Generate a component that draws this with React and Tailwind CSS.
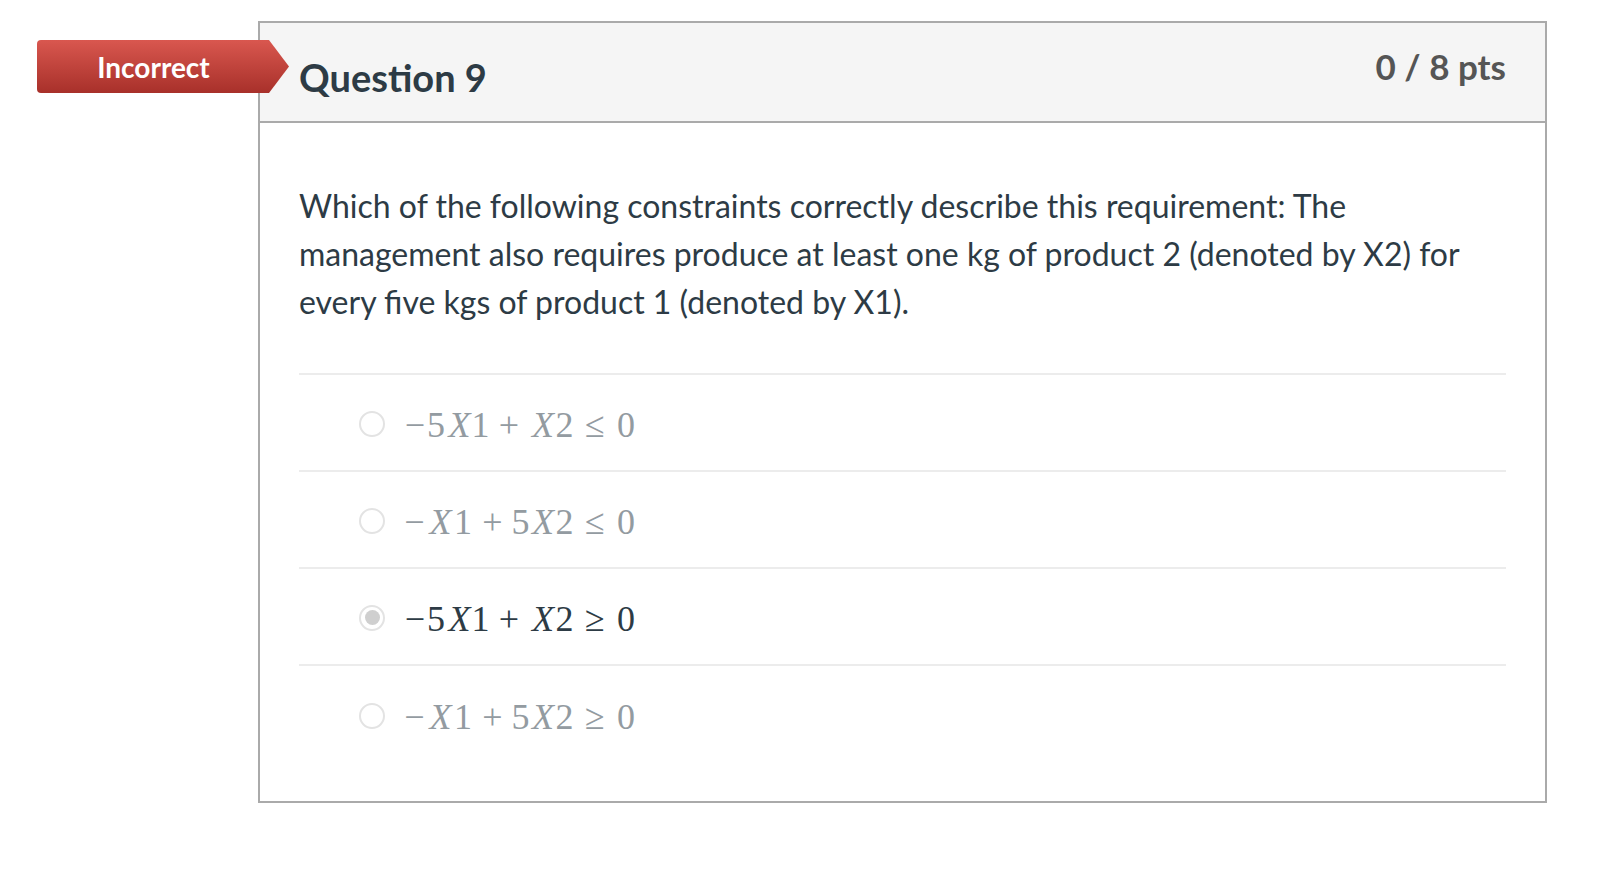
import React from 'react';

// each token: [text, box width, italic]
const answers = [
  {
    id: 'a',
    selected: false,
    tokens: [['−', 22], ['5', 20], ['X', 27, true], ['1', 15], ['+', 42], ['X', 26, true], ['2', 17], ['≤', 44], ['0', 18]],
  },
  {
    id: 'b',
    selected: false,
    tokens: [['−', 21], ['X', 31, true], ['1', 14], ['+', 45], ['5', 11], ['X', 34, true], ['2', 9], ['≤', 52], ['0', 10]],
  },
  {
    id: 'c',
    selected: true,
    tokens: [['−', 22], ['5', 20], ['X', 27, true], ['1', 15], ['+', 42], ['X', 26, true], ['2', 17], ['≥', 44], ['0', 18]],
  },
  {
    id: 'd',
    selected: false,
    tokens: [['−', 21], ['X', 31, true], ['1', 14], ['+', 45], ['5', 11], ['X', 34, true], ['2', 9], ['≥', 52], ['0', 10]],
  },
];

const MathExpr = ({ tokens, selected }) => (
  <span
    className={`mt-[4px] flex h-[40px] items-center text-[36px] leading-none ${selected ? 'text-[#2d3b45]' : 'text-[#939ba1]'}`}
    style={{ fontFamily: '"Liberation Serif", serif' }}
  >
    {tokens.map(([t, w, italic], i) => (
      <span key={i} className="flex justify-center whitespace-nowrap" style={{ width: w }}>
        <span className={italic ? 'italic' : ''}>{t}</span>
      </span>
    ))}
  </span>
);

const Radio = ({ checked }) => (
  <span className="mt-[2px] flex h-[26px] w-[26px] shrink-0 items-center justify-center rounded-full border-2 border-[#e3e3e3] bg-white">
    {checked && <span className="h-[15px] w-[15px] rounded-full bg-[#cfcfcf]" />}
  </span>
);

const App = () => {
  return (
    <div className="h-[870px] w-full bg-white" style={{ fontFamily: 'Lato, "Liberation Sans", sans-serif' }}>
      <div className="pl-[258px] pt-[21px]">
        <div className="relative w-[1289px] border-2 border-[#aaaaaa]">
          <div
            className="absolute left-[-223px] top-[17px] flex h-[53px] w-[252px] items-center rounded-l-[4px] bg-gradient-to-b from-[#d9574f] to-[#a8302a] pr-[19px] [clip-path:polygon(0_0,calc(100%-20px)_0,100%_50%,calc(100%-20px)_100%,0_100%)]"
          >
            <span className="mt-[1px] w-full text-center text-[28px] font-bold leading-none text-white">Incorrect</span>
          </div>

          <div className="flex h-[100px] items-start justify-between border-b-2 border-[#aaaaaa] bg-[#f5f5f5] pl-[39px] pr-[39px]">
            <h2 className="mt-[35px] text-[38px] font-bold leading-none text-[#2d3b45]">Question 9</h2>
            <div className="mt-[26px] text-[35px] font-bold leading-none text-[#555555]">0 / 8 pts</div>
          </div>

          <div className="px-[39px] pb-[38px] pt-[59px]">
            <p className="text-[32px] leading-[48px] text-[#2d3b45]">
              Which of the following constraints correctly describe this requirement: The management also requires
              produce at least one kg of product 2 (denoted by X2) for every five kgs of product 1 (denoted by X1).
            </p>

            <div className="mt-[47px] border-t-2 border-[#ececec]">
              {answers.map((a, i) => (
                <div
                  key={a.id}
                  className={`flex h-[97px] items-center gap-[19px] pl-[60px] ${i < answers.length - 1 ? 'border-b-2 border-[#ececec]' : ''}`}
                >
                  <Radio checked={a.selected} />
                  <MathExpr tokens={a.tokens} selected={a.selected} />
                </div>
              ))}
            </div>
          </div>
        </div>
      </div>
    </div>
  );
};

export default App;
